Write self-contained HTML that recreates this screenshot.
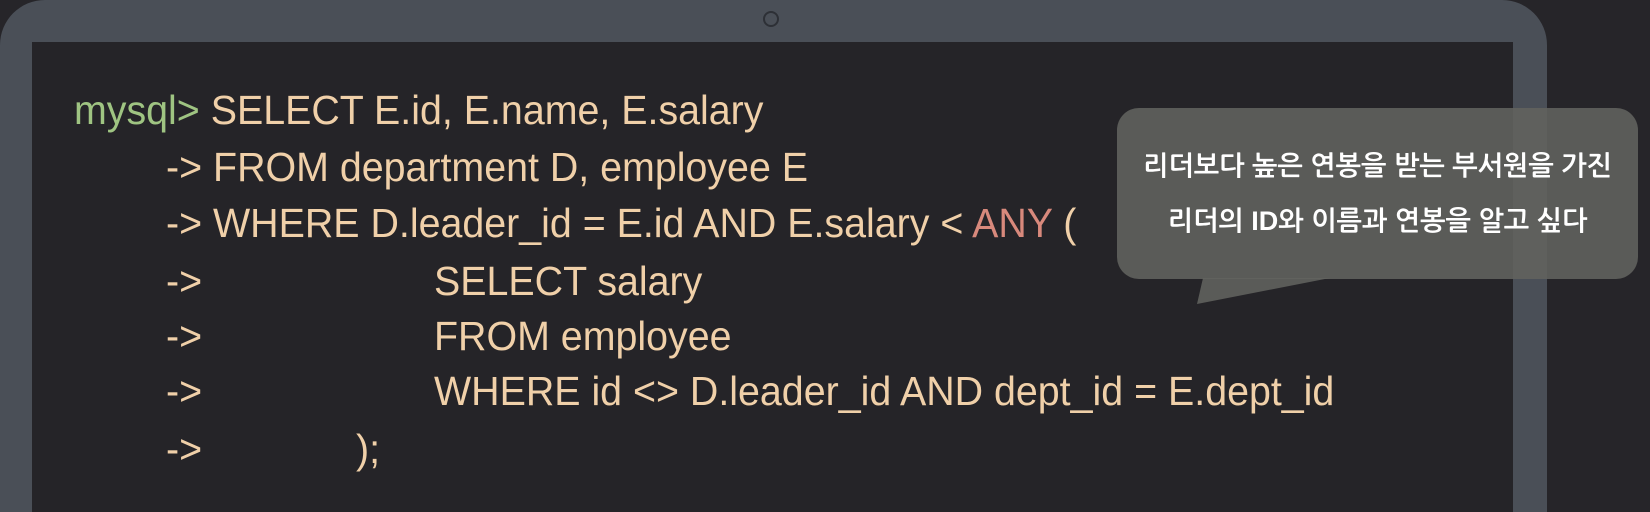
<!DOCTYPE html>
<html><head><meta charset="utf-8"><style>
html,body{margin:0;padding:0;width:1650px;height:512px;overflow:hidden;}
body{background:#262529;position:relative;font-family:"Liberation Sans","NanumGothic",sans-serif;}
.bezel{position:absolute;left:0;top:0;width:1547px;height:512px;background:#4a4f57;border-radius:45px 45px 0 0;}
.screen{position:absolute;left:32px;top:42px;width:1481px;height:470px;background:#252428;}
.cam{position:absolute;left:763px;top:11px;width:12px;height:12px;border:2px solid #2d3036;border-radius:50%;}
.l{position:absolute;font-size:41px;color:#f0d0a9;white-space:pre;line-height:44px;transform:scaleX(0.96);transform-origin:left;}
.g{color:#9fc482}.r{color:#d8897c}
.bub{position:absolute;left:1117px;top:108px;width:521px;height:171px;background:rgba(98,99,94,0.88);border-radius:22px;}
.bt{position:absolute;left:0;width:521px;text-align:center;color:#fff;font-size:27px;font-weight:bold;font-family:"Liberation Sans","NanumGothic","Noto Sans CJK KR",sans-serif;}
</style></head><body>
<div class="bezel"></div>
<div class="cam"></div>
<div class="screen"></div>
<div class="l" style="left:74px;top:88px"><span class="g">mysql&gt;</span> SELECT E.id, E.name, E.salary</div>
<div class="l" style="left:166px;top:145px">-&gt; FROM department D, employee E</div>
<div class="l" style="left:166px;top:201px">-&gt; WHERE D.leader_id = E.id AND E.salary &lt; <span class="r">ANY</span> (</div>
<div class="l" style="left:166px;top:259px">-&gt;</div><div class="l" style="left:434px;top:259px">SELECT salary</div>
<div class="l" style="left:166px;top:314px">-&gt;</div><div class="l" style="left:434px;top:314px">FROM employee</div>
<div class="l" style="left:166px;top:369px">-&gt;</div><div class="l" style="left:434px;top:369px">WHERE id &lt;&gt; D.leader_id AND dept_id = E.dept_id</div>
<div class="l" style="left:166px;top:427px">-&gt;</div><div class="l" style="left:356px;top:427px">);</div>
<svg style="position:absolute;left:0;top:0" width="1650" height="512"><polygon points="1203,278 1197,304 1330,278" fill="rgba(98,99,94,0.88)"/></svg>
<div class="bub">
<div class="bt" style="top:43px">리더보다 높은 연봉을 받는 부서원을 가진</div>
<div class="bt" style="top:98px">리더의 ID와 이름과 연봉을 알고 싶다</div>
</div>
</body></html>
